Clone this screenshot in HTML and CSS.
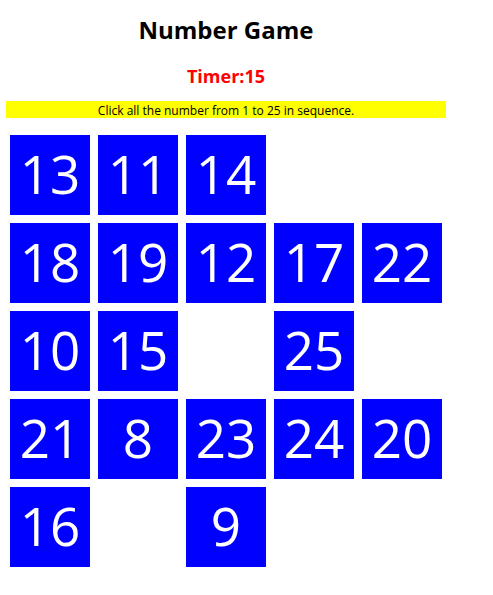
FILE: index.html
```html
<!DOCTYPE html>
<html lang="en">
<head>
<meta charset="utf-8">
<title>Number Game</title>
<link rel="stylesheet" href="styles.css">
</head>
<body>
<main class="game">
<h1 class="title">Number Game</h1>
<h2 class="timer">Timer:15</h2>
<p class="hint">Click all the number from 1 to 25 in sequence.</p>
<div class="board">
<button class="tile">13</button>
<button class="tile">11</button>
<button class="tile">14</button>
<span class="gap"></span>
<span class="gap"></span>
<button class="tile">18</button>
<button class="tile">19</button>
<button class="tile">12</button>
<button class="tile">17</button>
<button class="tile">22</button>
<button class="tile">10</button>
<button class="tile">15</button>
<span class="gap"></span>
<button class="tile">25</button>
<span class="gap"></span>
<button class="tile">21</button>
<button class="tile">8</button>
<button class="tile">23</button>
<button class="tile">24</button>
<button class="tile">20</button>
<button class="tile">16</button>
<span class="gap"></span>
<button class="tile">9</button>
</div>
</main>
</body>
</html>
```
FILE: styles.css
```css
body {
  margin: 0;
  background: #fff;
  color: #000;
  font-family: "Open Sans", "Noto Sans", sans-serif;
}

.game {
  max-width: 440px;
  margin: 12px 6px;
  text-align: center;
}

.title {
  margin: 0 0 16px;
  font-size: 24px;
  line-height: 36px;
}

.timer {
  margin: 0 0 12px;
  color: #f00;
  font-size: 18px;
  line-height: 25px;
}

.hint {
  margin: 0 0 17px;
  padding-top: 2px;
  background: #ff0;
  font-size: 12px;
  line-height: 15px;
}

.board {
  display: grid;
  grid-template-columns: repeat(5, 1fr);
  gap: 8px;
  padding: 0 4px;
}

.tile {
  box-sizing: border-box;
  aspect-ratio: 1;
  padding: 0 0 2px;
  border: 0;
  background: #00f;
  color: #fff;
  font-family: inherit;
  font-size: 53px;
  line-height: 76px;
}
```
